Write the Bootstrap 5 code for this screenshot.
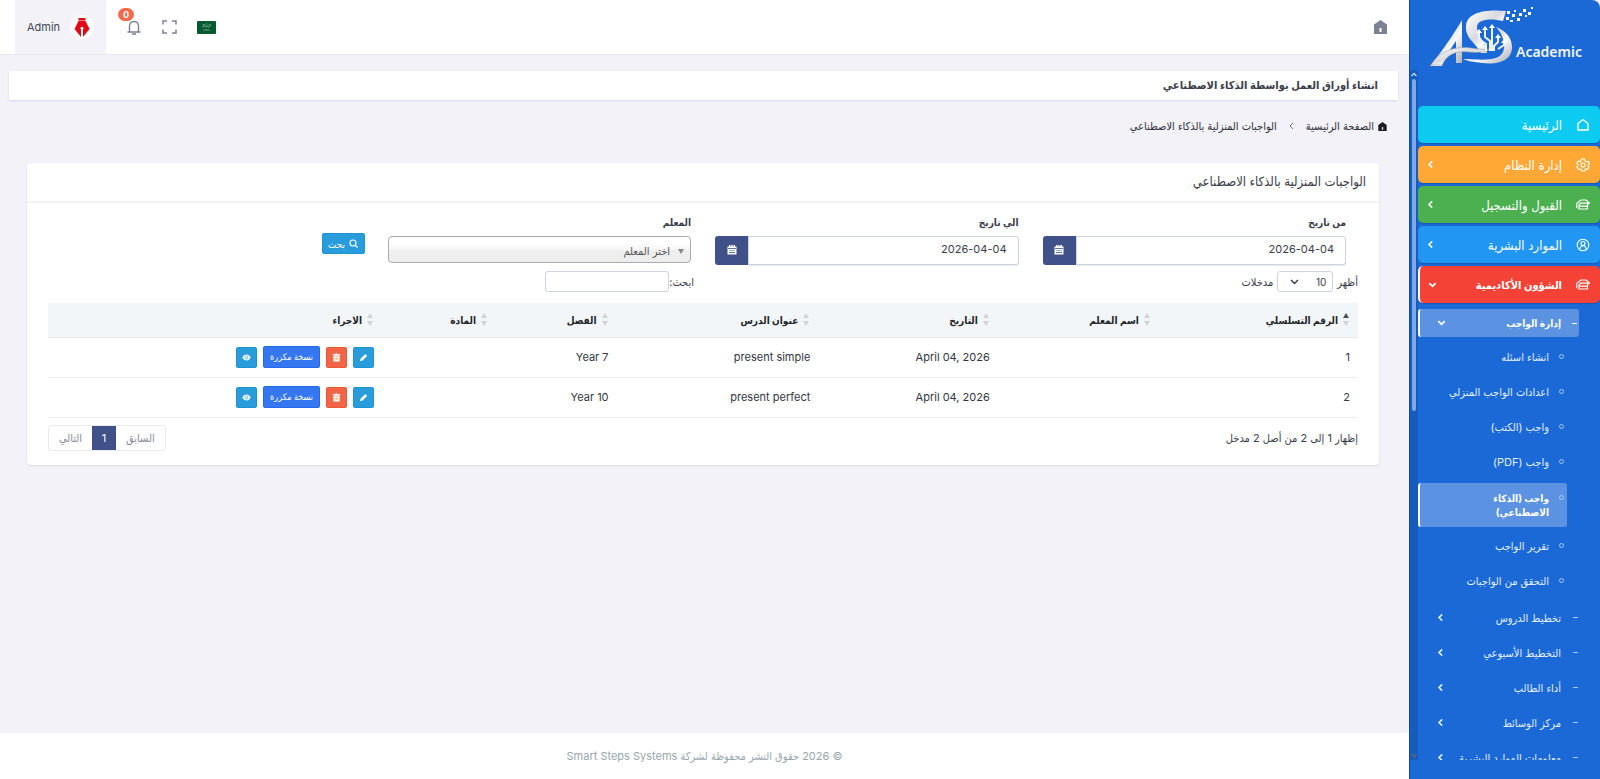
<!DOCTYPE html>
<html lang="ar" dir="rtl">
<head>
<meta charset="utf-8">
<meta name="viewport" content="width=device-width, initial-scale=1">
<title>الواجبات المنزلية بالذكاء الاصطناعي</title>
<link href="https://cdn.jsdelivr.net/npm/bootstrap@5.3.0/dist/css/bootstrap.min.css" rel="stylesheet">
<style>
body{font-family:Inter,"DejaVu Sans Condensed","DejaVu Sans",sans-serif;font-size:12px;line-height:18px;color:#3a3d4a;background:#f3f2f9}
input,select,button{font-family:inherit}
a{text-decoration:none;color:inherit}
.side{width:191px;height:100vh;position:sticky;top:0;background:#1b69d7;border-left:1px solid #0f4ba6;border-top-right-radius:8px;color:#fff}
.brand{height:70px;padding:0 17px}
.scroller{height:calc(100vh - 89px)}
.track{width:8px;background:#155cbd}
.thumb{width:4px;height:332px;background:#7ea9e8;border-radius:2px}
.menu{padding-top:36px}
.menu .top-link{height:37px;margin-bottom:3px;padding:0 10px 0 8px;gap:14px;border-radius:5px;font-size:13px;box-shadow:0 1px 1px rgba(0,0,0,.15)}
.menu .caret{margin-right:auto}
.c1{background:#0dcaf0}.c2{background:#ffa836}.c3{background:#4caf50}.c4{background:#2196f3}
.menu .c5{background:#f44336;border-left:2px solid #fff;font-weight:700;font-size:11px}
.sub-link{height:35px;padding:0 39px 0 18px;font-size:11px;position:relative;color:#e4eefc}
.sub-link::before{content:"";position:absolute;right:22px;width:5px;height:1px;background:#a9c7f2}
.sub-link.on{height:28px;margin:6px 21px 2px 0;padding:0 18px 0 17px;background:#5b93e2;border-left:2px solid #fff;border-radius:3px;font-weight:700;font-size:10px;color:#fff}
.sub-link.on::before{right:2px;background:#fff}
.leaves{padding-bottom:2px}
.leaf{min-height:35px;padding:0 51px 0 4px;font-size:11px;line-height:14px;position:relative;color:#e4eefc}
.leaf::before{content:"";position:absolute;right:36px;width:5px;height:5px;border:1px solid #a9c7f2;border-radius:50%}
.leaf.on{margin:4px 33px 1px 0;padding:8px 18px 8px 50px;background:#5b93e2;border-left:2px solid #fff;border-radius:3px;font-weight:700;font-size:10px;color:#fff}
.leaf.on::before{right:3px;top:12px}
.topbar{height:55px;background:#fff;border-bottom:1px solid #e9e8f0;padding:0 22px 0 15px;color:#7d8196}
.topbar-tools{gap:20px}
.userbox{height:54px;width:91px;gap:10px;background:#f3f2f9;color:#444855;font-size:11px}
.note{position:relative}
.note .count{position:absolute;top:-12px;left:-8px;width:16px;height:13px;border-radius:7px;background:#f46a4b;color:#fff;font-size:9px;line-height:13px;font-weight:700;text-align:center}
.icon-btn{border:0;background:none;padding:0;color:inherit;line-height:0}
.title-bar{margin:16px 11px 0 9px;padding:0 20px;height:29px;background:#fff;box-shadow:0 1px 2px #d3d6e6}
.title-bar h1{font-size:11px;font-weight:700;margin:0}
.crumbs{padding:17px 22px 0 0;gap:10px;font-size:11px;color:#2c2f38}
.panel{margin:28px 30px 0 27px;border:0;border-radius:4px;box-shadow:0 1px 2px #d8d9e6}
.panel-head{height:40px;padding:0 13px;border-bottom:2px solid #f3f3f6}
.panel-head h2{font-size:13px;margin:0}
.panel-in{padding:10px 21px 14px}
.form-label{font-size:10px;font-weight:700;margin:0 0 5px;display:block;line-height:18px}
.date-group{height:29px}
.date-group .form-control{font-size:11px;border:1px solid #ced4da;border-radius:0 3px 3px 0;padding:0 11px 2px;color:#3a3d4a;box-shadow:0 1px 1px #e6e8ee}
.cal{width:33px;flex-shrink:0;padding:0 0 3px;border:0;border-radius:3px 0 0 3px;background:#405189;color:#fff}
.pick{appearance:none;width:100%;height:27px;border:1px solid #aaa;border-radius:4px;padding:3px 20px 0 4px;font-size:11px;color:#555;background:linear-gradient(#fff 20%,#f6f6f6 50%,#eee 52%,#eee)}
.pick-wrap{position:relative}
.pick-wrap svg{position:absolute;right:7px;top:13px}
.btn-mini{height:21px;min-width:21px;padding:0 5px;border:1px solid #1c93d4;border-radius:2px;background:#299cdb;color:#fff;font-size:10px;line-height:18px;display:inline-flex;align-items:center;justify-content:center;gap:4px}
.btn-mini svg{flex-shrink:0}
.btn-mini.del{background:#f06548;border-color:#ee5636}
.btn-mini.copy{background:#3577f1;border-color:#2368ee;height:22px;padding:0 6px;font-size:9px}
.btn-mini.find{margin-top:9px;margin-right:11px;width:43px}
.len,.seek{border:1px solid #ced4da;border-radius:3px;height:21px;font-size:10px;background:#fff;color:#3a3d4a}
.len{appearance:none;width:56px;padding:0 6px}
.len-wrap{position:relative}
.len-wrap svg{position:absolute;left:13px;top:7px}
.seek{width:124px}
.tools{font-size:11px;height:21px;margin:6px 0 11px}
.tools .seek-side{padding-right:9px}
.grid-table{table-layout:fixed;margin:0;--bs-table-bg:transparent;font-size:11px}
.grid-table>thead th{height:34px;padding:0 20px 0 0;background:#f3f6f9;border-bottom:1px solid #e4e9ee;color:#212529;font-size:10px;vertical-align:middle;text-align:right;position:relative}
.grid-table>tbody td{height:40px;padding:0 8px 0 0;vertical-align:middle;border-bottom:1px solid #eeeef1;color:#33363f;text-align:right}
.sort{position:absolute;right:9px;top:10px}
.sort.up{--up:#495057}
.acts{gap:6px}
.foot-row{margin-top:7px;font-size:11px}
.pager{height:26px;border:1px solid #e9ebec;border-radius:3px;overflow:hidden;color:#878a99}
.pager a{padding:0 10px;line-height:24px}
.pager .now{background:#405189;color:#fff;width:24px;padding:0;text-align:center}
.bottom{height:46px;background:#fff;color:#98a6ad;font-size:11px}
</style>
</head>
<body>
<svg width="0" height="0" class="position-absolute" aria-hidden="true">
<defs>
<symbol id="chev" viewBox="0 0 8 8"><path d="M5.5 1.200 2.700 4l2.800 2.800" fill="none" stroke="currentColor" stroke-width="1.400"/></symbol>
<symbol id="down" viewBox="0 0 10 8"><path d="M1.500 2 5 5.500 8.500 2" fill="none" stroke="currentColor" stroke-width="2"/></symbol>
<symbol id="cap" viewBox="0 0 14 12"><g fill="none" stroke="currentColor" stroke-width="1.200"><path d="M.8 4.200 5 1h5l3.500 3.200H4.500L3 6v4h8.500V6l1-1.800M3 7.200h8.500M.8 4.200v5"/></g></symbol>
<symbol id="cal" viewBox="0 0 10 10"><path d="M.5 1.500H2V0h1.500v1.500H4.300V0h1.400v1.500h.8V0H8v1.500h1.500V9.500h-9z" fill="currentColor"/><path d="M1 3.500h8M2.500 5.500h1.200M4.500 5.500h1.200M6.500 5.500h1.200M2 7.500h6" stroke="#405189" stroke-width=".8"/></symbol>
<symbol id="sorter" viewBox="0 0 6 13"><path d="M3 0 6 5H0z" fill="var(--up,#cfd3d7)"/><path d="M3 13 0 8h6z" fill="#cfd3d7"/></symbol>
<symbol id="pen" viewBox="0 0 10 10"><path d="M1.200 9 1.700 6.500 7 1.200 9 3.200 3.700 8.500z" fill="currentColor"/></symbol>
<symbol id="bin" viewBox="0 0 10 10"><path d="M.8 1.500h2.700V.5h3v1h2.700V3H.8zM1.500 3.500h7V9.500h-7z" fill="currentColor"/><path d="M3.500 5v3M5 5v3M6.500 5v3" stroke="#f7a54a" stroke-width=".7"/></symbol>
<symbol id="eye" viewBox="0 0 10 10"><path d="M.5 5C2 .6 8 .6 9.500 5 8 9.400 2 9.400.5 5z" fill="currentColor"/><circle cx="5" cy="5" r="1.700" fill="#fff" stroke="#299cdb" stroke-width=".8"/></symbol>
<linearGradient id="silver" x1="0" y1="0" x2="1" y2="1"><stop offset="0" stop-color="#fff"/><stop offset=".45" stop-color="#d9dadd"/><stop offset=".6" stop-color="#fafafa"/><stop offset="1" stop-color="#a7a9ae"/></linearGradient>
</defs>
</svg>
<div class="d-flex min-vh-100">
<aside class="side flex-shrink-0">
 <a href="#" class="brand d-block" aria-label="AS Academic">
 <svg width="153" height="70" viewBox="0 0 153 70" direction="ltr">
  <path d="M0 66C8 57 22 37 32 20v43h-6V41C21 48 15 58 12 66z" fill="url(#silver)"/>
  <path d="M76 11C56 9 37 12 36 26c-1 12 9 16 15 27h6C56 42 47 36 47 27c0-8 14-9 26-6z" fill="url(#silver)"/>
  <path d="M66 27c11 4 16 12 16 20 0 14-14 18-30 16-8-1-15-2-19-4 10 0 24 2 33-1 12-4 10-20 0-31z" fill="url(#silver)"/>
  <path d="M1 65C9 51 25 46 41 48c8 1 14 2 20 1-13 6-22 2-32 3C19 54 16 58 12 65z" fill="url(#silver)" stroke="#8d9098" stroke-width=".5"/>
  <g fill="none" stroke="#eef1f6" stroke-width="2"><path d="M49 31v8l7 5v7M55 28v9l5 4v10M62 26v25M68 36v6l-4 4v5M74 41v4l-6 4"/></g>
  <g fill="#fff"><path d="m46 33 3-4 3 4zM52 30l3-4 3 4zM59 28l3-4 3 4zM65 38l3-4 3 4zM71 43l3-4 3 4z"/></g>
  <g fill="#fff"><path d="M77 11h3v3h-3zM76 17h3v3h-3zM82 14h3v3h-3zM80 20h3v2h-3zM87 18h3v3h-3zM84 10h2v2h-2zM89 13h3v3h-3zM93 9h3v3h-3zM95 15h2v2h-2zM98 12h3v3h-3zM101 7h2v2h-2z"/></g>
  <text x="152" y="57" text-anchor="end" font-family="Noto Sans, sans-serif" font-weight="600" font-size="14" fill="#f3f6fb" direction="ltr">Academic</text>
 </svg></a>
 <div class="scroller d-flex overflow-hidden">
 <nav class="menu flex-grow-1">
  <a href="#" class="top-link c1 d-flex align-items-center"><svg width="14" height="14" viewBox="0 0 14 14"><path d="M2 5.500 7 1.500l5 4V12H2z" fill="none" stroke="currentColor" stroke-width="1.300"/></svg>الرئيسية</a>
  <a href="#" class="top-link c2 d-flex align-items-center"><svg width="14" height="14" viewBox="0 0 14 14" fill="none" stroke="currentColor" stroke-width="1.100"><path d="M5.500 1h3l.5 2 1.500.8 2-.5L13.500 6 12 7.500v.5l1 1.500-1.500 2-2-.5L8.500 13h-3L5 11.200l-2.500.3L.800 9 2 7.500V6.500L.800 5l1.700-2 2 .7z"/><circle cx="7" cy="7" r="2"/></svg>إدارة النظام<svg class="caret" width="9" height="9"><use href="#chev"/></svg></a>
  <a href="#" class="top-link c3 d-flex align-items-center"><svg width="14" height="12"><use href="#cap"/></svg>القبول والتسجيل<svg class="caret" width="9" height="9"><use href="#chev"/></svg></a>
  <a href="#" class="top-link c4 d-flex align-items-center"><svg width="14" height="14" viewBox="0 0 14 14" fill="none" stroke="currentColor" stroke-width="1.100"><circle cx="7" cy="7" r="5.800"/><circle cx="7" cy="5.500" r="2"/><path d="M4 11.500c0-5 6-5 6 0"/></svg>الموارد البشرية<svg class="caret" width="9" height="9"><use href="#chev"/></svg></a>
  <a href="#" class="top-link c5 d-flex align-items-center"><svg width="14" height="12"><use href="#cap"/></svg>الشؤون الأكاديمية<svg class="caret" width="9" height="8"><use href="#down"/></svg></a>
  <a href="#" class="sub-link on d-flex align-items-center">إدارة الواجب<svg class="caret" width="9" height="8"><use href="#down"/></svg></a>
  <div class="leaves">
  <a href="#" class="leaf d-flex align-items-center">انشاء اسئله</a>
  <a href="#" class="leaf d-flex align-items-center">اعدادات الواجب المنزلي</a>
  <a href="#" class="leaf d-flex align-items-center">واجب (الكتب)</a>
  <a href="#" class="leaf d-flex align-items-center">واجب (PDF)</a>
  <a href="#" class="leaf on d-flex align-items-center">واجب (الذكاء الاصطناعي)</a>
  <a href="#" class="leaf d-flex align-items-center">تقرير الواجب</a>
  <a href="#" class="leaf d-flex align-items-center">التحقق من الواجبات</a>
  </div>
  <a href="#" class="sub-link d-flex align-items-center">تخطيط الدروس<svg class="caret" width="9" height="9"><use href="#chev"/></svg></a>
  <a href="#" class="sub-link d-flex align-items-center">التخطيط الأسبوعي<svg class="caret" width="9" height="9"><use href="#chev"/></svg></a>
  <a href="#" class="sub-link d-flex align-items-center">أداء الطالب<svg class="caret" width="9" height="9"><use href="#chev"/></svg></a>
  <a href="#" class="sub-link d-flex align-items-center">مركز الوسائط<svg class="caret" width="9" height="9"><use href="#chev"/></svg></a>
  <a href="#" class="sub-link d-flex align-items-center">معلومات الموارد البشرية<svg class="caret" width="9" height="9"><use href="#chev"/></svg></a>
 </nav>
 <div class="track d-flex flex-column align-items-center flex-shrink-0">
  <svg width="8" height="9" viewBox="0 0 8 9"><path d="M1.500 6 4 3.500 6.500 6" fill="none" stroke="#c5d6f0" stroke-width="1.400"/></svg>
  <div class="thumb"></div>
  <svg class="mt-auto" width="8" height="9" viewBox="0 0 8 9"><path d="M1.500 3 4 6l2.500-3" fill="none" stroke="#5d6a78" stroke-width="1.400"/></svg>
 </div>
 </div>
</aside>
<div class="d-flex flex-column flex-grow-1">
 <header class="topbar d-flex align-items-center justify-content-between">
  <a href="#" aria-label="الرئيسية" class="lh-1"><svg width="13" height="14" viewBox="0 0 13 14"><path d="M0 4.500 6.500 0 13 4.500V14H0z" fill="currentColor"/><path d="M6.500 8v4" stroke="#fff" stroke-width="2"/></svg></a>
  <div class="topbar-tools d-flex align-items-center">
   <a href="#" aria-label="العربية" class="lh-1"><svg width="19" height="13" viewBox="0 0 19 13"><rect width="19" height="13" rx="1" fill="#045a30"/><path d="M5 5.500c1 .8 1.500-1 2-.2s1.500-1.500 2 0 1.500-1.500 2 0 1.500.2 3-1.500M6 3.500h1.500M9 3h1M12 3.500h1" fill="none" stroke="#c6dccf" stroke-width=".7"/><path d="M6.500 9h6" stroke="#8fb9a0" stroke-width=".8"/></svg></a>
   <button class="icon-btn" aria-label="ملء الشاشة"><svg width="15" height="14" viewBox="0 0 15 14"><path d="M1 4.500V1h4M10 1h4v3.500M14 9.500V13h-4M5 13H1V9.500" fill="none" stroke="currentColor" stroke-width="1.500"/></svg></button>
   <button class="icon-btn note" aria-label="الإشعارات"><svg width="16" height="15" viewBox="0 0 16 15"><path d="M1.500 12h13M3.500 12V6c0-6 9-6 9 0v6M6 14h4" fill="none" stroke="currentColor" stroke-width="1.400"/></svg><span class="count">0</span></button>
   <a href="#" class="userbox d-flex align-items-center justify-content-center"><svg width="24" height="24" viewBox="0 0 24 24"><circle cx="12" cy="12" r="12" fill="#fff"/><path d="M8.500 3h7v2.500h-7zM8.500 6h7L19.500 14 13 22V14.500a1.500 1.500 0 1 0-2 0V22L4.500 14z" fill="#e30613"/></svg><span>Admin</span></a>
  </div>
 </header>
 <main class="flex-grow-1">
  <div class="title-bar d-flex align-items-center"><h1>انشاء أوراق العمل بواسطة الذكاء الاصطناعي</h1></div>
  <nav class="crumbs d-flex align-items-center"><a href="#" class="d-flex align-items-center gap-1"><svg width="9" height="9" viewBox="0 0 13 14"><path d="M0 4.500 6.500 0 13 4.500V14H0z" fill="#1b1d22"/><path d="M6.500 8v4" stroke="#fff" stroke-width="2"/></svg>الصفحة الرئيسية</a><svg width="9" height="8" class="text-secondary" viewBox="0 0 8 8"><path d="M5.500 1 2.500 4l3 3" fill="none" stroke="currentColor"/></svg><span>الواجبات المنزلية بالذكاء الاصطناعي</span></nav>
  <section class="card panel">
   <div class="panel-head d-flex align-items-center"><h2>الواجبات المنزلية بالذكاء الاصطناعي</h2></div>
   <div class="panel-in">
    <form class="row g-0">
     <div class="col-3 px-2"><div class="px-1"><label class="form-label" for="d1">من تاريخ</label><div class="date-group d-flex"><input id="d1" class="form-control" value="2026-04-04"><button type="button" class="cal" aria-label="تقويم"><svg width="10" height="10"><use href="#cal"/></svg></button></div></div></div>
     <div class="col-3 px-2"><div class="px-1"><label class="form-label" for="d2">الي تاريخ</label><div class="date-group d-flex"><input id="d2" class="form-control" value="2026-04-04"><button type="button" class="cal" aria-label="تقويم"><svg width="10" height="10"><use href="#cal"/></svg></button></div></div></div>
     <div class="col-3 px-2"><div class="px-1"><label class="form-label" for="tch">المعلم</label><div class="pick-wrap"><select id="tch" class="pick"><option>اختر المعلم</option></select><svg width="6" height="5" viewBox="0 0 6 5"><path d="M0 0h6L3 5z" fill="#888"/></svg></div></div></div>
     <div class="col-3 d-flex align-items-center"><button type="button" class="btn-mini find"><svg width="9" height="9" viewBox="0 0 9 9"><circle cx="4" cy="4" r="3" fill="none" stroke="#fff" stroke-width="1.100"/><path d="m6 6 2.500 2.500" stroke="#fff" stroke-width="1.200"/></svg>بحث</button></div>
    </form>
    <div class="tools row g-0">
     <div class="col-6 d-flex align-items-center gap-1"><label for="len">أظهر</label><span class="len-wrap"><select id="len" class="len d-block"><option>10</option></select><svg width="9" height="8" viewBox="0 0 9 8"><path d="m1 2 3.500 3.500L8 2" fill="none" stroke="#343a40" stroke-width="1.400"/></svg></span><span>مدخلات</span></div>
     <div class="col-6 d-flex align-items-center seek-side"><label for="seek">ابحث:</label><input id="seek" class="seek"></div>
    </div>
    <table class="table grid-table">
     <colgroup><col style="width:15.2%"><col style="width:12.3%"><col style="width:13.7%"><col style="width:15.4%"><col style="width:9.2%"><col style="width:8.7%"><col></colgroup>
     <thead><tr>
      <th>الرقم التسلسلي<svg class="sort up" width="6" height="13"><use href="#sorter"/></svg></th><th>اسم المعلم<svg class="sort" width="6" height="13"><use href="#sorter"/></svg></th><th>التاريخ<svg class="sort" width="6" height="13"><use href="#sorter"/></svg></th><th>عنوان الدرس<svg class="sort" width="6" height="13"><use href="#sorter"/></svg></th><th>الفصل<svg class="sort" width="6" height="13"><use href="#sorter"/></svg></th><th>المادة<svg class="sort" width="6" height="13"><use href="#sorter"/></svg></th><th>الاجراء<svg class="sort" width="6" height="13"><use href="#sorter"/></svg></th>
     </tr></thead>
     <tbody>
      <tr><td>1</td><td></td><td dir="ltr">April 04, 2026</td><td>present simple</td><td>Year 7</td><td></td><td><div class="acts d-flex align-items-center"><button class="btn-mini" aria-label="تعديل"><svg width="9" height="9"><use href="#pen"/></svg></button><button class="btn-mini del" aria-label="حذف"><svg width="9" height="9"><use href="#bin"/></svg></button><button class="btn-mini copy">نسخة مكررة</button><button class="btn-mini" aria-label="عرض"><svg width="9" height="9"><use href="#eye"/></svg></button></div></td></tr>
      <tr><td>2</td><td></td><td dir="ltr">April 04, 2026</td><td>present perfect</td><td>Year 10</td><td></td><td><div class="acts d-flex align-items-center"><button class="btn-mini" aria-label="تعديل"><svg width="9" height="9"><use href="#pen"/></svg></button><button class="btn-mini del" aria-label="حذف"><svg width="9" height="9"><use href="#bin"/></svg></button><button class="btn-mini copy">نسخة مكررة</button><button class="btn-mini" aria-label="عرض"><svg width="9" height="9"><use href="#eye"/></svg></button></div></td></tr>
     </tbody>
    </table>
    <div class="foot-row d-flex align-items-center justify-content-between"><span>إظهار 1 إلى 2 من أصل 2 مدخل</span><div class="pager d-flex"><a href="#">السابق</a><a href="#" class="now">1</a><a href="#">التالي</a></div></div>
   </div>
  </section>
 </main>
 <footer class="bottom d-flex align-items-center justify-content-center">© 2026 حقوق النشر محفوظة لشركة Smart Steps Systems</footer>
</div>
</div>
<script src="https://cdn.jsdelivr.net/npm/bootstrap@5.3.0/dist/js/bootstrap.bundle.min.js"></script>
</body>
</html>
